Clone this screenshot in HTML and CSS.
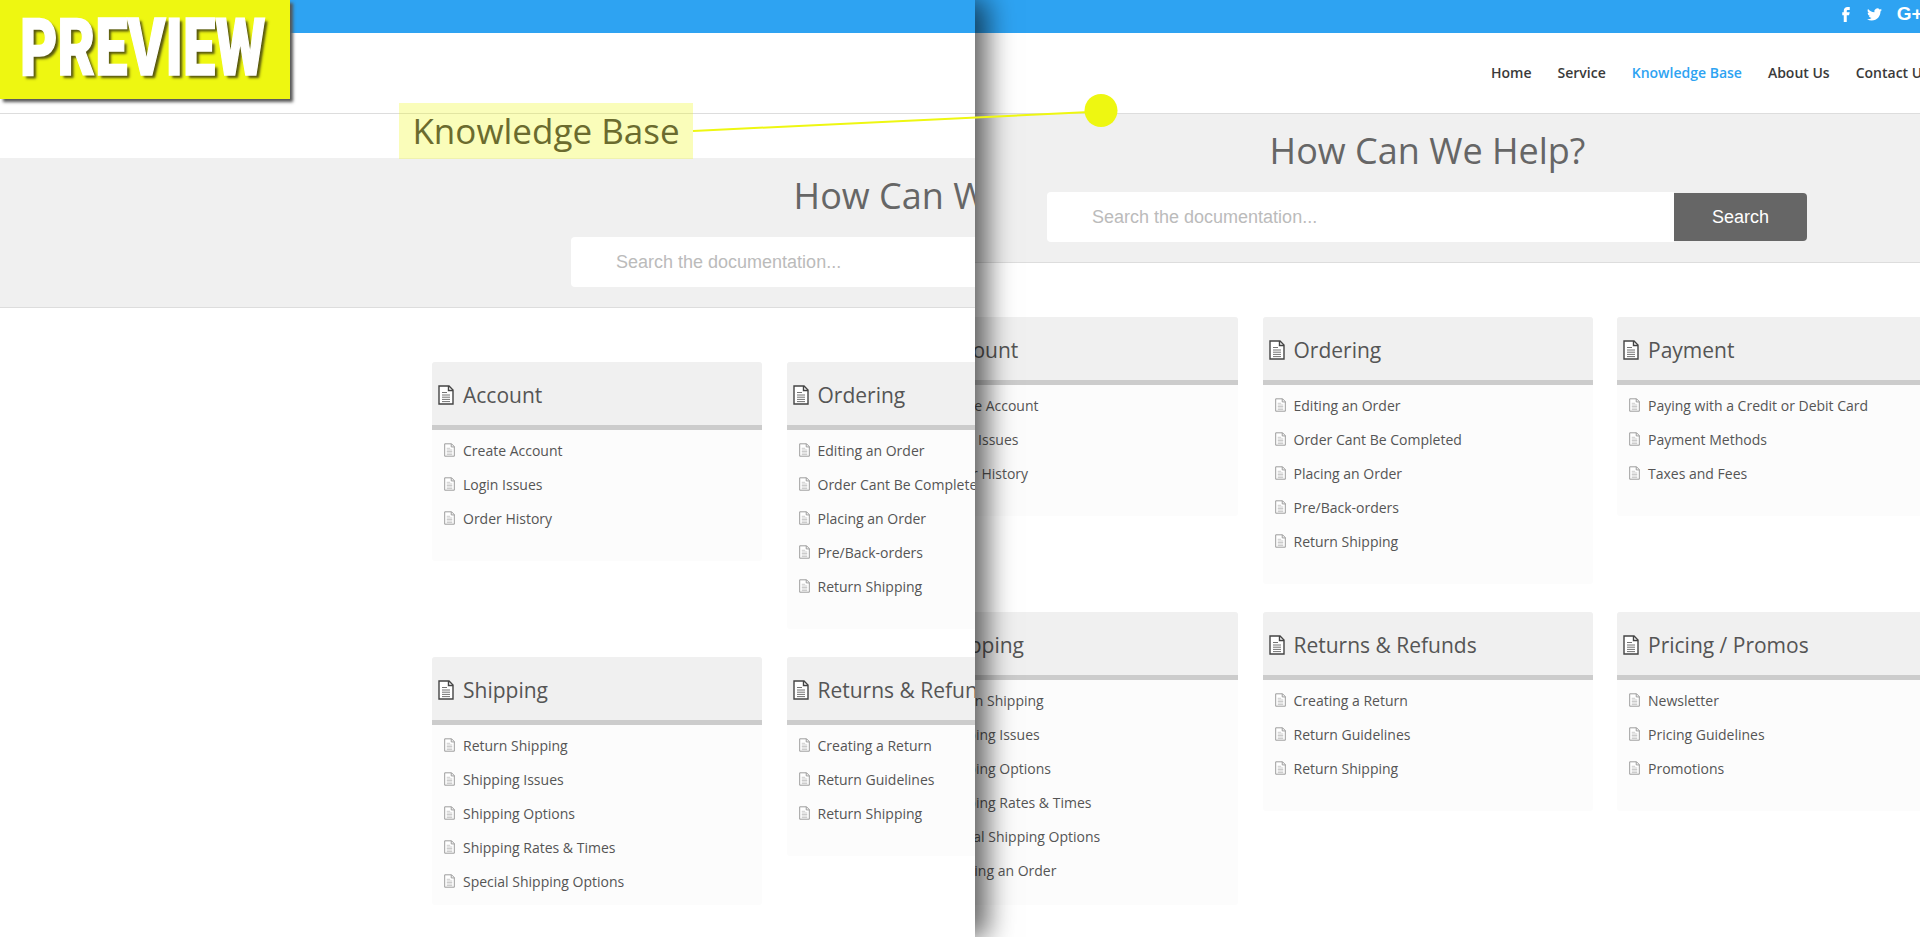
FILE: index.html
```html
<!DOCTYPE html>
<html lang="en">
<head>
    <meta charset="UTF-8">
    <meta name="viewport" content="width=device-width, initial-scale=1.0">
    <title>Knowledge Base Preview</title>
    <link rel="stylesheet" href="styles.css">
</head>
<body>
    <svg class="icon-defs" width="0" height="0">
        <symbol id="doc" viewBox="0 0 16 20">
            <path d="M1 1h10l4 4v14H1z" fill="#fff" stroke="currentColor" stroke-width="1.4"/>
            <path d="M10.500 1v4.500H15" fill="none" stroke="currentColor" stroke-width="1.400"/>
            <path d="M4 7.500h5M4 10h8M4 12.200h8M4 14.400h8M4 16.600h8" fill="none" stroke="currentColor" stroke-width="1" opacity="0.75"/>
        </symbol>
    </svg>

    <!-- back page, the one sliding in from the right -->
    <div class="page page-back">
        <div class="topbar">
            <svg class="social social-f" viewBox="7 4 10 20"><path d="M14 8h3V4h-3c-2.800 0-5 2.200-5 5v2H7v4h2v9h4v-9h3l1-4h-4V9c0-.6.4-1 1-1z"/></svg>
            <svg class="social social-tw" viewBox="0 0 24 24"><path d="M23.953 4.570a10 10 0 01-2.825.775 4.958 4.958 0 002.163-2.723c-.951.555-2.005.959-3.127 1.184a4.920 4.920 0 00-8.384 4.482C7.690 8.095 4.067 6.130 1.640 3.162a4.822 4.822 0 00-.666 2.475c0 1.710.870 3.213 2.188 4.096a4.904 4.904 0 01-2.228-.616v.06a4.923 4.923 0 003.946 4.827 4.996 4.996 0 01-2.212.085 4.936 4.936 0 004.604 3.417 9.867 9.867 0 01-6.102 2.105c-.39 0-.779-.023-1.170-.067a13.995 13.995 0 007.557 2.209c9.053 0 13.998-7.496 13.998-13.985 0-.21 0-.42-.015-.63A9.935 9.935 0 0024 4.590z"/></svg>
            <span class="social-g">G+</span>
        </div>
        <div class="site-header">
            <a class="nav-link">Home</a>
            <a class="nav-link">Service</a>
            <a class="nav-link nav-active">Knowledge Base</a>
            <a class="nav-link">About Us</a>
            <a class="nav-link">Contact Us</a>
        </div>
        <div class="hero">
            <h1 class="hero-title">How Can We Help?</h1>
            <div class="search">
                <div class="search-input">Search the documentation...</div>
                <div class="search-btn">Search</div>
            </div>
        </div>
        <div class="cards">
            <div class="card">
                <div class="card-head"><svg class="doc-lg"><use href="#doc"/></svg>Account</div>
                <ul class="card-list">
                    <li><svg class="doc-sm"><use href="#doc"/></svg>Create Account</li>
                    <li><svg class="doc-sm"><use href="#doc"/></svg>Login Issues</li>
                    <li><svg class="doc-sm"><use href="#doc"/></svg>Order History</li>
                </ul>
            </div>
            <div class="card">
                <div class="card-head"><svg class="doc-lg"><use href="#doc"/></svg>Ordering</div>
                <ul class="card-list">
                    <li><svg class="doc-sm"><use href="#doc"/></svg>Editing an Order</li>
                    <li><svg class="doc-sm"><use href="#doc"/></svg>Order Cant Be Completed</li>
                    <li><svg class="doc-sm"><use href="#doc"/></svg>Placing an Order</li>
                    <li><svg class="doc-sm"><use href="#doc"/></svg>Pre/Back-orders</li>
                    <li><svg class="doc-sm"><use href="#doc"/></svg>Return Shipping</li>
                </ul>
            </div>
            <div class="card">
                <div class="card-head"><svg class="doc-lg"><use href="#doc"/></svg>Payment</div>
                <ul class="card-list">
                    <li><svg class="doc-sm"><use href="#doc"/></svg>Paying with a Credit or Debit Card</li>
                    <li><svg class="doc-sm"><use href="#doc"/></svg>Payment Methods</li>
                    <li><svg class="doc-sm"><use href="#doc"/></svg>Taxes and Fees</li>
                </ul>
            </div>
            <div class="card">
                <div class="card-head"><svg class="doc-lg"><use href="#doc"/></svg>Shipping</div>
                <ul class="card-list list-tight">
                    <li><svg class="doc-sm"><use href="#doc"/></svg>Return Shipping</li>
                    <li><svg class="doc-sm"><use href="#doc"/></svg>Shipping Issues</li>
                    <li><svg class="doc-sm"><use href="#doc"/></svg>Shipping Options</li>
                    <li><svg class="doc-sm"><use href="#doc"/></svg>Shipping Rates &amp; Times</li>
                    <li><svg class="doc-sm"><use href="#doc"/></svg>Special Shipping Options</li>
                    <li><svg class="doc-sm"><use href="#doc"/></svg>Tracking an Order</li>
                </ul>
            </div>
            <div class="card">
                <div class="card-head"><svg class="doc-lg"><use href="#doc"/></svg>Returns &amp; Refunds</div>
                <ul class="card-list">
                    <li><svg class="doc-sm"><use href="#doc"/></svg>Creating a Return</li>
                    <li><svg class="doc-sm"><use href="#doc"/></svg>Return Guidelines</li>
                    <li><svg class="doc-sm"><use href="#doc"/></svg>Return Shipping</li>
                </ul>
            </div>
            <div class="card">
                <div class="card-head"><svg class="doc-lg"><use href="#doc"/></svg>Pricing / Promos</div>
                <ul class="card-list">
                    <li><svg class="doc-sm"><use href="#doc"/></svg>Newsletter</li>
                    <li><svg class="doc-sm"><use href="#doc"/></svg>Pricing Guidelines</li>
                    <li><svg class="doc-sm"><use href="#doc"/></svg>Promotions</li>
                </ul>
            </div>
        </div>
    </div>

    <!-- front page, cut off by the sliding edge -->
    <div class="front-pane">
        <div class="page page-front">
            <div class="topbar"></div>
            <div class="site-header"></div>
            <div class="hero">
                <h1 class="hero-title">How Can We Help?</h1>
                <div class="search">
                    <div class="search-input">Search the documentation...</div>
                    <div class="search-btn">Search</div>
                </div>
            </div>
            <div class="cards">
                <div class="card">
                    <div class="card-head"><svg class="doc-lg"><use href="#doc"/></svg>Account</div>
                    <ul class="card-list">
                        <li><svg class="doc-sm"><use href="#doc"/></svg>Create Account</li>
                        <li><svg class="doc-sm"><use href="#doc"/></svg>Login Issues</li>
                        <li><svg class="doc-sm"><use href="#doc"/></svg>Order History</li>
                    </ul>
                </div>
                <div class="card">
                    <div class="card-head"><svg class="doc-lg"><use href="#doc"/></svg>Ordering</div>
                    <ul class="card-list">
                        <li><svg class="doc-sm"><use href="#doc"/></svg>Editing an Order</li>
                        <li><svg class="doc-sm"><use href="#doc"/></svg>Order Cant Be Completed</li>
                        <li><svg class="doc-sm"><use href="#doc"/></svg>Placing an Order</li>
                        <li><svg class="doc-sm"><use href="#doc"/></svg>Pre/Back-orders</li>
                        <li><svg class="doc-sm"><use href="#doc"/></svg>Return Shipping</li>
                    </ul>
                </div>
                <div class="card card-empty"></div>
                <div class="card">
                    <div class="card-head"><svg class="doc-lg"><use href="#doc"/></svg>Shipping</div>
                    <ul class="card-list list-tightest">
                        <li><svg class="doc-sm"><use href="#doc"/></svg>Return Shipping</li>
                        <li><svg class="doc-sm"><use href="#doc"/></svg>Shipping Issues</li>
                        <li><svg class="doc-sm"><use href="#doc"/></svg>Shipping Options</li>
                        <li><svg class="doc-sm"><use href="#doc"/></svg>Shipping Rates &amp; Times</li>
                        <li><svg class="doc-sm"><use href="#doc"/></svg>Special Shipping Options</li>
                    </ul>
                </div>
                <div class="card">
                    <div class="card-head"><svg class="doc-lg"><use href="#doc"/></svg>Returns &amp; Refunds</div>
                    <ul class="card-list">
                        <li><svg class="doc-sm"><use href="#doc"/></svg>Creating a Return</li>
                        <li><svg class="doc-sm"><use href="#doc"/></svg>Return Guidelines</li>
                        <li><svg class="doc-sm"><use href="#doc"/></svg>Return Shipping</li>
                    </ul>
                </div>
            </div>
        </div>
    </div>

    <!-- annotation layer -->
    <svg class="callout-line" width="1920" height="200">
        <line x1="693" y1="131" x2="1090" y2="112" stroke="#eef711" stroke-width="2"/>
        <circle cx="1101" cy="110.500" r="16.500" fill="#eef711"/>
    </svg>
    <div class="callout-label">Knowledge Base</div>
    <div class="preview-badge"><span class="preview-text">PREVIEW</span></div>
</body>
</html>
```

FILE: styles.css
```css
html, body {
    height: 100%;
}
body {
    margin: 0;
    overflow: hidden;
    position: relative;
    background: #fff;
    font-family: 'Open Sans', sans-serif;
    color: #444;
}
.icon-defs {
    position: absolute;
}

/* the two page copies */
.page {
    width: 1903px;
}
.page-back {
    margin-left: 476px;
}
.front-pane {
    position: absolute;
    top: 0;
    left: 0;
    width: 975px;
    height: 100%;
    overflow: hidden;
    background: #fff;
    box-shadow: 12px 0 26px rgba(0, 0, 0, 0.62);
}
.page-front .hero {
    margin-top: 44px;
    height: 149px;
}
.page-front .hero-title {
    padding-top: 12px;
}

/* top bar */
.topbar {
    height: 33px;
    box-sizing: border-box;
    background: #2ea3f2;
    display: flex;
    justify-content: flex-end;
    align-items: center;
    padding: 0 456.5px 5px 0;
    color: #fff;
}
.social {
    fill: #fff;
    display: block;
}
.social-f {
    width: 8px;
    height: 15px;
    margin-right: 17px;
}
.social-tw {
    width: 15px;
    height: 15px;
    margin-right: 15px;
}
.social-g {
    font-family: 'Liberation Sans', sans-serif;
    font-weight: bold;
    font-size: 19px;
    line-height: 20px;
}

/* nav */
.site-header {
    height: 78px;
    border-bottom: 1px solid #ddd;
    display: flex;
    justify-content: flex-end;
    align-items: center;
    gap: 26px;
    padding: 0 450px 2px 0;
}
.nav-link {
    font-size: 14px;
    font-weight: 600;
    color: #3a3a3a;
}
.nav-active {
    color: #2ea3f2;
}

/* hero + search */
.hero {
    height: 148px;
    border-bottom: 1px solid #ddd;
    background: #f0f0f0;
}
.hero-title {
    margin: 0;
    padding-top: 11px;
    font-size: 36px;
    line-height: 52px;
    font-weight: 400;
    color: #666;
    text-align: center;
}
.search {
    width: 760px;
    height: 50px;
    margin: 15px 0 0 571px;
    display: flex;
    align-items: center;
    font-family: 'Liberation Sans', sans-serif;
}
.search-input {
    flex: 1;
    height: 50px;
    line-height: 50px;
    box-sizing: border-box;
    padding-left: 45px;
    background: #fff;
    border-radius: 4px 0 0 4px;
    color: #bbb;
    font-size: 18px;
}
.search-btn {
    width: 133px;
    height: 48px;
    line-height: 48px;
    background: #666;
    color: #fff;
    font-size: 18px;
    text-align: center;
    border-radius: 0 4px 4px 0;
}

/* cards */
.cards {
    width: 1039px;
    margin: 54px auto 0;
    display: grid;
    grid-template-columns: repeat(3, 330px);
    column-gap: 24.5px;
    row-gap: 28px;
    align-items: start;
}
.card {
    background: #fcfcfc;
    border-radius: 3px;
    overflow: hidden;
}
.card-empty {
    background: none;
}
.card-head {
    height: 61px;
    padding: 2px 0 0 6px;
    background: #f0f0f0;
    border-bottom: 5px solid #ccc;
    display: flex;
    align-items: center;
    font-size: 21px;
    color: #555;
}
.doc-lg {
    width: 16px;
    height: 20px;
    margin-right: 9px;
    color: #444;
}
.doc-sm {
    width: 11px;
    height: 14px;
    margin-right: 8px;
    color: #999;
    flex-shrink: 0;
}
.card-list {
    list-style: none;
    margin: 0;
    padding: 3px 0 26px 12px;
    font-size: 14px;
    color: #555;
}
.card-list li {
    height: 34px;
    display: flex;
    align-items: center;
}
.list-tight {
    padding-bottom: 18px;
}
.list-tightest {
    padding-bottom: 7px;
}

/* annotation */
.callout-line {
    position: absolute;
    top: 0;
    left: 0;
}
.callout-label {
    position: absolute;
    left: 399px;
    top: 103px;
    width: 294px;
    height: 56px;
    line-height: 56px;
    text-align: center;
    background: rgba(238, 247, 17, 0.29);
    color: #6b6b2e;
    font-size: 35px;
}
.preview-badge {
    position: absolute;
    top: 0;
    left: 0;
    width: 290px;
    height: 99px;
    background: #eef711;
    box-shadow: 3px 3px 3px #555;
    overflow: hidden;
}
.preview-text {
    position: absolute;
    left: 20px;
    top: 2px;
    font-family: 'Roboto', sans-serif;
    font-weight: 900;
    font-size: 79px;
    line-height: 92px;
    color: #fff;
    transform: scaleX(0.73);
    transform-origin: left top;
    text-shadow: 4px 3px 3px #55550f;
    -webkit-text-stroke: 1.5px #fff;
}
```
